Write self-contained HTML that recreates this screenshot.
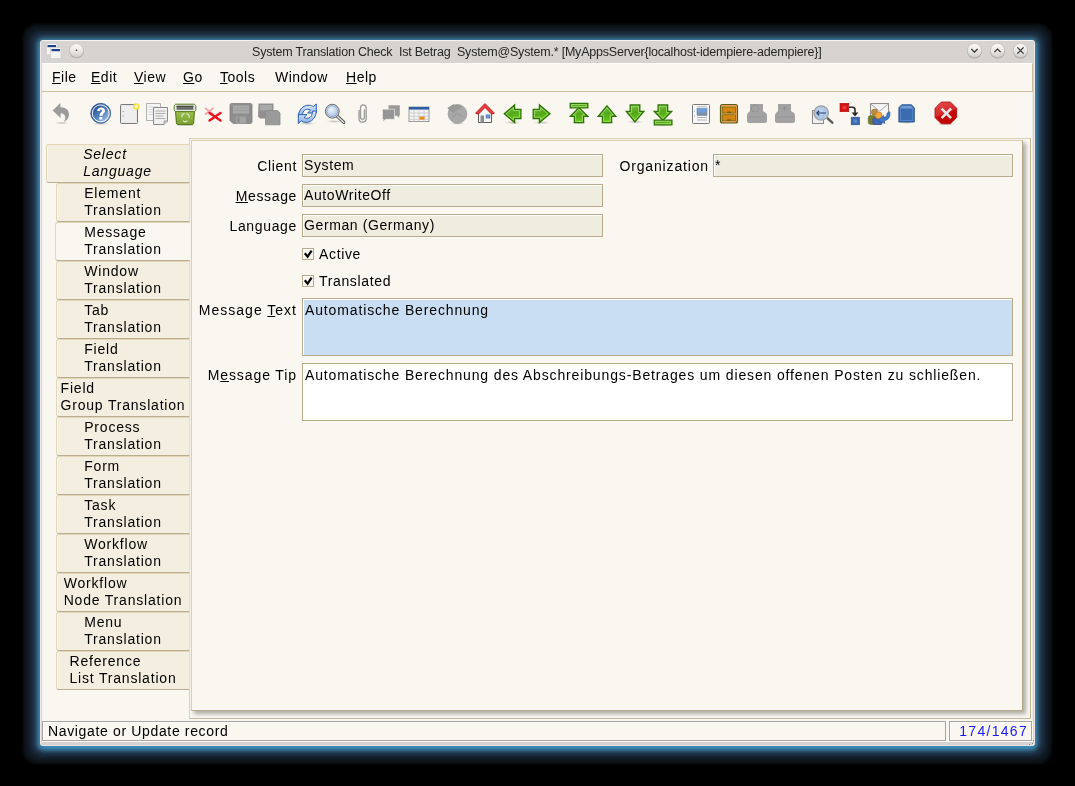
<!DOCTYPE html>
<html><head><meta charset="utf-8">
<style>
*{box-sizing:border-box;margin:0;padding:0}
html,body{width:1075px;height:786px;background:#000;overflow:hidden}
body{position:relative;font-family:"Liberation Sans",sans-serif;font-size:14px;color:#000}
.a{position:absolute}
#glow{left:40px;top:40px;width:995px;height:706px;border-radius:4px;box-shadow:0 4px 6px -1px rgba(70,170,225,0.5),0 1px 0 1px rgb(50, 120, 156),0 1px 0 2px rgb(56, 108, 142),0 1px 0 3px rgb(50, 94, 122),0 1px 0 4px rgb(44, 82, 106),0 1px 0 5px rgb(38, 68, 90),0 1px 0 6px rgb(34, 60, 81),0 1px 0 7px rgb(29, 50, 72),0 1px 0 8px rgb(27, 45, 63),0 1px 0 9px rgb(24, 40, 57),0 1px 0 10px rgb(23, 36, 51),0 1px 0 11px rgb(20, 31, 44),0 1px 0 12px rgb(17, 28, 39),0 1px 0 13px rgb(16, 25, 34),0 1px 0 14px rgb(15, 21, 29),0 1px 0 15px rgb(12, 20, 24),0 1px 0 16px rgb(12, 16, 22),0 1px 0 17px rgb(8, 10, 14),0 1px 0 18px rgb(3, 5, 7)}
#win{left:40px;top:40px;width:995px;height:706px;background:#d7d3d0;border-radius:3px;border-top:1px solid #f6f2f0;border-left:1px solid #efe8e6;border-right:1px solid #ece6e4;border-bottom:1px solid #e6e0de}
#cream{left:42px;top:63px;width:991px;height:678px;background:#faf7f0;border-left:1px solid #f4f2ee}
#L{position:absolute;left:0;top:0;width:1075px;height:786px;will-change:transform}
#ttext{left:252px;top:45px;font-size:12.5px;color:#262626;white-space:pre;letter-spacing:-0.2px}
#menu{left:42px;top:63px;width:991px;height:29px;border-top:1px solid #fff;border-right:1px solid #c9bd9f;border-bottom:1px solid #cdbf9c}
#tbr{left:1032px;top:92px;width:1px;height:629px;background:#ebe7e2}
#sbw{left:42px;top:741px;width:991px;height:1px;background:#fbfaf8}
.mi{position:absolute;top:6px;font-size:14px;letter-spacing:0.5px;white-space:pre}
.u{text-decoration:underline;text-underline-offset:1px;text-decoration-thickness:1px}
.tab{position:absolute;width:134px;height:39px;background:#f3eee0;border:1px solid #e2d6b6;border-right:1px solid #e6dcc2;border-radius:3px 0 0 3px;border-bottom:1px solid #b9ad92;box-shadow:inset 1px 0 0 #fbf8ef}
.tab.cur{background:#faf7f0;border-right:none}
.tab .t{position:absolute;left:0;right:0;top:1px;text-align:center;line-height:17px;font-size:14px;letter-spacing:0.8px}
.tab .t span{display:inline-block;text-align:left;white-space:pre}
#pane{left:189px;top:138px;width:842px;height:581px;border:1px solid #ddd0b0;border-right-color:#bdb093;border-bottom-color:#c4b799}
#panel{left:191px;top:140px;width:832px;height:571px;border:1px solid #dcceac;border-right-color:#b4a789;border-bottom-color:#b9ab8b;box-shadow:3px 3px 4px rgba(0,0,0,0.3)}
.lbl{position:absolute;font-size:14px;white-space:pre;letter-spacing:0.65px}
.fld{position:absolute;border:1px solid #b9ab8e;box-shadow:inset 1px 1px 0 #fff;background:#efede0}
.fld .v{position:absolute;left:1px;top:2px;font-size:14px;white-space:pre;letter-spacing:0.6px}
.chk{position:absolute;width:12px;height:12px;border:1px solid #b8ab90;box-shadow:inset 1px 1px 0 #fff;background:#faf7f0}
.sb{position:absolute;top:721px;height:20px;border:1px solid #a8a6a2;box-shadow:inset 1px 1px 0 #fff}
</style></head><body>
<div id="glow" class="a"></div>
<div id="win" class="a"></div>
<div id="cream" class="a"></div>
<div id="menu" class="a"></div><div id="tbr" class="a"></div><div id="sbw" class="a"></div><svg class="a" style="left:1020px;top:730px" width="15" height="15"><g fill="#8a8684"><rect x="13" y="10" width="1" height="1"/><rect x="12" y="13" width="1" height="1"/><rect x="9" y="14" width="1" height="1"/></g><g fill="#fff"><rect x="14" y="11" width="1" height="1"/><rect x="13" y="14" width="1" height="1"/><rect x="10" y="15" width="1" height="1"/></g></svg>
<div id="pane" class="a"></div>
<div id="panel" class="a"></div>
<svg class="a" style="left:0;top:0" width="1075" height="786" viewBox="0 0 1075 786">
<defs>
 <linearGradient id="gblue" x1="0.15" y1="0.1" x2="0.85" y2="0.9"><stop offset="0" stop-color="#234c8e"/><stop offset="0.55" stop-color="#5582bd"/><stop offset="1" stop-color="#a8c5e6"/></linearGradient>
 <linearGradient id="ggreen" x1="0.2" y1="0" x2="0.6" y2="1"><stop offset="0" stop-color="#7fbf4a"/><stop offset="0.5" stop-color="#52a818"/><stop offset="1" stop-color="#6ccc12"/></linearGradient>
 <linearGradient id="gtrash" x1="0" y1="0" x2="0" y2="1"><stop offset="0" stop-color="#9cc14e"/><stop offset="1" stop-color="#78a02e"/></linearGradient>
 <linearGradient id="gbtn" x1="0" y1="0" x2="0" y2="1"><stop offset="0" stop-color="#fbfbfb"/><stop offset="0.55" stop-color="#e9e7e5"/><stop offset="1" stop-color="#cfccca"/></linearGradient>
 <radialGradient id="gshadow" cx="0.5" cy="0.5" r="0.5"><stop offset="0" stop-color="#000" stop-opacity="0.22"/><stop offset="1" stop-color="#000" stop-opacity="0"/></radialGradient>
 <linearGradient id="gred" x1="0.3" y1="0" x2="0.7" y2="1"><stop offset="0" stop-color="#e24848"/><stop offset="0.5" stop-color="#d42a2a"/><stop offset="0.52" stop-color="#c90808"/><stop offset="1" stop-color="#c00000"/></linearGradient>
 <linearGradient id="gorange" x1="0" y1="0" x2="0" y2="1"><stop offset="0" stop-color="#e89a1c"/><stop offset="1" stop-color="#c97a08"/></linearGradient>
 <linearGradient id="gbook" x1="0" y1="0" x2="0" y2="1"><stop offset="0" stop-color="#4a7fc6"/><stop offset="1" stop-color="#2f5fa8"/></linearGradient>
</defs>
<!-- title bar app icon -->
<rect x="46.5" y="43.5" width="10.5" height="11" fill="#f6f6f6" stroke="#d0d0d0" stroke-width="0.8"/>
<rect x="47.5" y="45" width="8.5" height="2.2" fill="#1e3f8a"/>
<rect x="50.5" y="47.5" width="10.5" height="11" fill="#f3f3f3" stroke="#d0d0d0" stroke-width="0.8"/>
<rect x="51.5" y="49" width="8.5" height="2.2" fill="#1e3f8a"/>
<!-- pin button -->
<circle cx="76.5" cy="51.2" r="7.1" fill="#a4a09d"/>
<circle cx="76.5" cy="50.5" r="6.9" fill="url(#gbtn)" stroke="#bdb9b6" stroke-width="0.6"/>
<circle cx="76.5" cy="50.3" r="0.8" fill="#222"/>
<!-- min/max/close -->
<g>
<circle cx="974.5" cy="51.3" r="7.3" fill="#a4a09d"/>
<circle cx="974.5" cy="50.5" r="7.1" fill="url(#gbtn)" stroke="#bdb9b6" stroke-width="0.6"/>
<path d="M971.4,49 L974.5,52.1 L977.6,49" fill="none" stroke="#2e2e2e" stroke-width="1.2"/>
<circle cx="997.5" cy="51.3" r="7.3" fill="#a4a09d"/>
<circle cx="997.5" cy="50.5" r="7.1" fill="url(#gbtn)" stroke="#bdb9b6" stroke-width="0.6"/>
<path d="M994.4,52.2 L997.5,49.1 L1000.6,52.2" fill="none" stroke="#2e2e2e" stroke-width="1.2"/>
<circle cx="1020.5" cy="51.3" r="7.3" fill="#a4a09d"/>
<circle cx="1020.5" cy="50.5" r="7.1" fill="url(#gbtn)" stroke="#bdb9b6" stroke-width="0.6"/>
<path d="M1017.4,47.4 L1023.6,53.6 M1023.6,47.4 L1017.4,53.6" fill="none" stroke="#2e2e2e" stroke-width="1.2"/>
</g>

<!-- 1 undo -->
<ellipse cx="62" cy="123" rx="7" ry="1.6" fill="url(#gshadow)"/>
<path d="M52.6,110.4 L60.4,103 L60.4,107.2 C65.5,107 69,110 69,114.5 C69,118 67,120.5 63.6,122 C65.2,120 65.6,118 65,116.2 C64.4,114.4 63,113.4 60.6,113.3 L60.6,118 Z" fill="#9c9c9c"/>
<!-- 2 help -->
<ellipse cx="101" cy="123.5" rx="9" ry="1.8" fill="url(#gshadow)"/>
<circle cx="100.7" cy="113.3" r="9.9" fill="url(#gblue)" stroke="#234d92" stroke-width="0.9"/>
<circle cx="100.7" cy="113.3" r="8.4" fill="none" stroke="#fff" stroke-width="1" opacity="0.95"/>
<path d="M97.2,111 C97.2,108.6 98.8,107.4 101.2,107.4 C103.6,107.4 105,108.8 105,110.7 C105,113 102.6,113.4 102.5,115.8 L99.5,115.8 C99.5,112.6 101.9,112.3 101.9,110.7 C101.9,110 101.5,109.6 100.9,109.6 C100.3,109.6 99.9,110.1 99.9,111 Z" fill="#fff"/>
<rect x="99.3" y="116.9" width="3.1" height="2.7" fill="#fff"/>
<!-- 3 new -->
<rect x="120.5" y="104.5" width="17" height="19" rx="1" fill="#e4e4e4" stroke="#7a7a7a" stroke-width="1"/>
<rect x="121.5" y="105.5" width="15" height="17" fill="#eeeeee"/>
<circle cx="123.2" cy="111.5" r="0.6" fill="#888"/><circle cx="123.2" cy="116" r="0.6" fill="#888"/>
<circle cx="136.3" cy="106.5" r="2.6" fill="#fff7b0" stroke="#f2de3a" stroke-width="1.3"/>
<!-- 4 copy -->
<path d="M146.5,103.5 L160.5,103.5 L160.5,120.5 L146.5,120.5 Z" fill="#f5f5f5" stroke="#b0b0b0" stroke-width="1"/>
<path d="M148.5,107 h9 M148.5,109.5 h9 M148.5,112 h9 M148.5,114.5 h9" stroke="#cfcfcf" stroke-width="0.8"/>
<path d="M153.5,107.5 L167.5,107.5 L167.5,121 L164,124.5 L153.5,124.5 Z" fill="#f0f0f0" stroke="#8a8a8a" stroke-width="1"/>
<path d="M164,124.5 L164,121 L167.5,121" fill="#cfcfcf" stroke="#8a8a8a" stroke-width="0.8"/>
<path d="M155.5,111 h10 M155.5,113.5 h10 M155.5,116 h8 M155.5,118.5 h10" stroke="#a5a5a5" stroke-width="0.9"/>
<!-- 5 trash -->
<ellipse cx="185" cy="125" rx="10" ry="1.5" fill="url(#gshadow)"/>
<path d="M175.5,110.5 L194.5,110.5 L193.6,123.2 C193.5,124.2 192.8,124.6 192,124.6 L178,124.6 C177.2,124.6 176.5,124.2 176.4,123.2 Z" fill="url(#gtrash)" stroke="#4f7319" stroke-width="1"/>
<path d="M176.2,104.2 L193.8,104.2 C195,104.2 195.8,105.2 195.8,106.3 L195.8,109.6 C195.8,110.7 195,111.6 193.8,111.6 L176.2,111.6 C175,111.6 174.2,110.7 174.2,109.6 L174.2,106.3 C174.2,105.2 175,104.2 176.2,104.2 Z" fill="#e6e9e2" stroke="#557a1c" stroke-width="1"/>
<rect x="176.6" y="105.8" width="16.8" height="4" fill="#6a6d68"/>
<rect x="176.6" y="105.8" width="16.8" height="1.2" fill="#4a4c48"/>
<path d="M181.8,117.2 a3.4,3.4 0 0 1 2.8,-3.6 M186.6,113.6 a3.4,3.4 0 0 1 2.5,4.2 M187.6,120.6 a3.4,3.4 0 0 1 -4.6,0" fill="none" stroke="#e2eccc" stroke-width="1.1"/>
<!-- 6 delete -->
<path d="M205,108 L213.5,114.5 M213.5,108 L205,114.5" stroke="#f7a0a8" stroke-width="1.6"/>
<path d="M209.5,113 L220.5,120.5 M220.5,113 L209.5,120.5" stroke="#ec1320" stroke-width="2.4" stroke-linecap="round"/>
<!-- 7 save -->
<path d="M231.5,103.5 L250.5,103.5 C251.3,103.5 252,104.2 252,105 L252,122 C252,122.8 251.3,123.5 250.5,123.5 L233,123.5 L230,120.5 L230,105 C230,104.2 230.7,103.5 231.5,103.5 Z" fill="#8e8e8e" stroke="#7f7f7f" stroke-width="0.8"/>
<rect x="233" y="105.5" width="16" height="8" fill="#a9a9a9"/>
<path d="M234,108 h14 M234,110.5 h14" stroke="#9c9c9c" stroke-width="0.8"/>
<rect x="236" y="116.5" width="10" height="7" fill="#a3a3a3"/>
<rect x="237.5" y="117.5" width="2" height="5" fill="#888"/>
<!-- 8 multi save -->
<path d="M258.5,103.5 L273.5,103.5 L273.5,118.5 L260,118.5 L258,116.5 Z" fill="#909090"/>
<rect x="260" y="105" width="12" height="5.5" fill="#a9a9a9"/>
<path d="M265.5,110.5 L277.5,110.5 L280,113 L280,124.8 L265.5,124.8 Z" fill="#9a9a9a" stroke="#8a8a8a" stroke-width="0.8"/>
<!-- 9 refresh -->
<linearGradient id="grefr" x1="0" y1="0" x2="0" y2="1"><stop offset="0" stop-color="#e2ecf9"/><stop offset="1" stop-color="#86ace0"/></linearGradient>
<ellipse cx="307" cy="123.5" rx="9" ry="1.6" fill="url(#gshadow)"/>
<path d="M298.3,116.5 C298.5,110 303,105 309,105.2 C311,105.3 312.5,106 313.3,106.8 L316.3,104 L316.3,113 L307.6,113 L310.5,110.2 C309.6,109.6 308.6,109.3 307.5,109.3 C304.5,109.3 302.5,111.5 302,116.5 Z" fill="url(#grefr)" stroke="#2b60b2" stroke-width="1"/>
<path d="M316.3,111.1 C316.1,117.6 311.6,122.6 305.6,122.4 C303.6,122.3 302.1,121.6 301.3,120.8 L298.3,123.6 L298.3,114.6 L307,114.6 L304.1,117.4 C305,118 306,118.3 307.1,118.3 C310.1,118.3 312.1,116.1 312.6,111.1 Z" fill="url(#grefr)" stroke="#2b60b2" stroke-width="1"/>
<!-- 10 find -->
<radialGradient id="glens" cx="0.4" cy="0.35" r="0.7"><stop offset="0" stop-color="#eef3fa"/><stop offset="1" stop-color="#a9c4e8"/></radialGradient>
<ellipse cx="334" cy="121.5" rx="8" ry="1.6" fill="url(#gshadow)"/>
<path d="M337.3,116.3 L343.8,122.3" stroke="#555" stroke-width="3.2" stroke-linecap="round"/>
<path d="M337.3,116.3 L343.8,122.3" stroke="#e8e8e8" stroke-width="1.4" stroke-linecap="round" stroke-dasharray="1.2 0.8"/>
<circle cx="332.3" cy="111.2" r="6.9" fill="#d8d8d8" stroke="#5a5a5a" stroke-width="0.9"/>
<circle cx="332.3" cy="111.2" r="5.4" fill="url(#glens)" stroke="#7aa3d8" stroke-width="0.8"/>
<!-- 11 attach -->
<path d="M359,110 L359,118.5 C359,121 360.5,122.2 362.5,122.2 C364.5,122.2 366.2,121 366.2,118.5 L366.2,108 C366.2,106 365,104.8 363.3,104.8 C361.6,104.8 360.5,106 360.5,108 L360.5,117 C360.5,118.5 361.3,119.2 362.5,119.2 C363.7,119.2 364.4,118.5 364.4,117 L364.4,109.5" fill="none" stroke="#9b9b9b" stroke-width="1.3"/>
<!-- 12 chat -->
<path d="M388.5,105.2 L399.8,105.2 L399.8,115.8 L398.8,115.8 L399.3,118 L396.8,115.8 L388.5,115.8 Z" fill="#9a9a9a"/>
<path d="M382.5,109.2 L394.5,109.2 L394.5,119.3 L385.5,119.3 L382.8,122 L383.3,119.3 L382.5,119.3 Z" fill="#959595" stroke="#f7f5ef" stroke-width="0.6"/>
<!-- 13 grid -->
<rect x="409" y="107" width="20" height="14.5" fill="#f3f3f3" stroke="#9a9a9a" stroke-width="1"/>
<rect x="409" y="107" width="20" height="2.6" fill="#2f5ea8"/>
<path d="M409,113 h20 M409,116.3 h20 M409,119.3 h20 M414,109.6 v12 M419,109.6 v12 M424,109.6 v12" stroke="#c5c5c5" stroke-width="0.8"/>
<rect x="419.5" y="116.6" width="5" height="3" fill="#f08a1a"/>
<!-- 14 history gray circle -->
<ellipse cx="457.5" cy="123.5" rx="8" ry="1.4" fill="url(#gshadow)"/>
<circle cx="457.5" cy="113.8" r="9.4" fill="#a8a8a8" stroke="#9a9a9a" stroke-width="0.8"/>
<path d="M452.6,117.6 L457.4,112.8 L461.4,116.6" fill="none" stroke="#8f8f8f" stroke-width="0.9"/>
<path d="M447.8,108.2 L453.6,104.5 L453.3,106.6 C455.5,105.2 458.5,105 461.5,106.5 L456.8,109.6 C455.6,110 454.6,110.8 453.6,112.4 Z" fill="#9c9c9c" stroke="#8a8a8a" stroke-width="0.7"/>
<path d="M459,104.6 C462,105.3 464.5,107.3 465.8,110" fill="none" stroke="#c8c8c8" stroke-width="1" stroke-dasharray="1 0.8"/>
<!-- 15 home -->
<path d="M478.5,112.5 L485,106.5 L491.5,112.5 L491.5,122.5 L478.5,122.5 Z" fill="#f6f6f6" stroke="#5e5e5e" stroke-width="1"/>
<rect x="480.5" y="115.5" width="3.5" height="7" fill="#8c8c8c"/>
<rect x="486" y="114.8" width="4" height="3.4" fill="#4a7ccc" stroke="#6f86aa" stroke-width="0.5"/>
<path d="M488,114.8 v3.4" stroke="#dfe8f4" stroke-width="0.5"/>
<path d="M475.6,113.2 L485,103.6 L494.4,113.2 L491.6,114.2 L485,107.4 L478.4,114.2 Z" fill="#ef3b3b" stroke="#b31b1b" stroke-width="0.9" stroke-linejoin="round"/>
<!-- 16 back -->
<ellipse cx="512.6" cy="122.6" rx="8.5" ry="1.8" fill="url(#gshadow)"/>
<path d="M504.30,113.80 L514.60,105.00 L514.60,109.30 L520.90,109.30 L520.90,118.50 L514.60,118.50 L514.60,122.60 Z" fill="url(#ggreen)" stroke="#2c7405" stroke-width="1.3" stroke-linejoin="miter"/>
<path d="M506.22,113.80 L513.35,119.89 L513.35,117.25 L519.65,117.25 L519.65,110.55 L513.35,110.55 L513.35,107.71 Z" fill="none" stroke="#b6e88a" stroke-width="0.8" opacity="0.85"/>
<ellipse cx="541.6" cy="122.6" rx="8.5" ry="1.8" fill="url(#gshadow)"/>
<path d="M550.00,113.80 L539.40,105.00 L539.40,109.30 L533.20,109.30 L533.20,118.50 L539.40,118.50 L539.40,122.60 Z" fill="url(#ggreen)" stroke="#2c7405" stroke-width="1.3" stroke-linejoin="miter"/>
<path d="M548.04,113.80 L540.65,107.66 L540.65,110.55 L534.45,110.55 L534.45,117.25 L540.65,117.25 L540.65,119.94 Z" fill="none" stroke="#b6e88a" stroke-width="0.8" opacity="0.85"/>
<ellipse cx="579.0" cy="122.6" rx="8.5" ry="1.8" fill="url(#gshadow)"/>
<path d="M587.80,103.30 L587.80,107.90 L570.30,107.90 L570.30,103.30 Z" fill="url(#ggreen)" stroke="#2c7405" stroke-width="1.3" stroke-linejoin="miter"/>
<path d="M579.00,107.60 L587.80,116.30 L583.60,116.30 L583.60,122.60 L574.40,122.60 L574.40,116.30 L570.30,116.30 Z" fill="url(#ggreen)" stroke="#2c7405" stroke-width="1.3" stroke-linejoin="miter"/>
<path d="M586.55,104.55 L571.55,104.55 L571.55,106.65 L586.55,106.65 Z" fill="none" stroke="#b6e88a" stroke-width="0.8" opacity="0.85"/>
<path d="M579.01,109.36 L573.32,115.05 L575.65,115.05 L575.65,121.35 L582.35,121.35 L582.35,115.05 L584.76,115.05 Z" fill="none" stroke="#b6e88a" stroke-width="0.8" opacity="0.85"/>
<ellipse cx="607.0" cy="122.6" rx="8.5" ry="1.8" fill="url(#gshadow)"/>
<path d="M607.00,105.80 L615.80,116.30 L611.60,116.30 L611.60,122.60 L602.40,122.60 L602.40,116.30 L598.20,116.30 Z" fill="url(#ggreen)" stroke="#2c7405" stroke-width="1.3" stroke-linejoin="miter"/>
<path d="M607.00,107.75 L600.88,115.05 L603.65,115.05 L603.65,121.35 L610.35,121.35 L610.35,115.05 L613.12,115.05 Z" fill="none" stroke="#b6e88a" stroke-width="0.8" opacity="0.85"/>
<ellipse cx="635.1" cy="121.9" rx="8.5" ry="1.8" fill="url(#gshadow)"/>
<path d="M635.00,121.90 L643.90,111.30 L639.80,111.30 L639.80,105.00 L630.20,105.00 L630.20,111.30 L626.30,111.30 Z" fill="url(#ggreen)" stroke="#2c7405" stroke-width="1.3" stroke-linejoin="miter"/>
<path d="M635.01,119.94 L641.22,112.55 L638.55,112.55 L638.55,106.25 L631.45,106.25 L631.45,112.55 L628.94,112.55 Z" fill="none" stroke="#b6e88a" stroke-width="0.8" opacity="0.85"/>
<ellipse cx="663.0" cy="124.9" rx="8.5" ry="1.8" fill="url(#gshadow)"/>
<path d="M662.90,120.20 L671.70,111.30 L667.70,111.30 L667.70,105.00 L658.10,105.00 L658.10,111.30 L654.20,111.30 Z" fill="url(#ggreen)" stroke="#2c7405" stroke-width="1.3" stroke-linejoin="miter"/>
<path d="M671.90,120.10 L671.90,124.90 L654.30,124.90 L654.30,120.10 Z" fill="url(#ggreen)" stroke="#2c7405" stroke-width="1.3" stroke-linejoin="miter"/>
<path d="M662.91,118.42 L668.71,112.55 L666.45,112.55 L666.45,106.25 L659.35,106.25 L659.35,112.55 L657.17,112.55 Z" fill="none" stroke="#b6e88a" stroke-width="0.8" opacity="0.85"/>
<path d="M670.65,121.35 L655.55,121.35 L655.55,123.65 L670.65,123.65 Z" fill="none" stroke="#b6e88a" stroke-width="0.8" opacity="0.85"/>
<!-- 22 report -->
<rect x="692.5" y="104.5" width="17" height="19" rx="1" fill="#f8f8f8" stroke="#7a7a7a" stroke-width="1"/>
<path d="M697,106.8 h10 M697,117.5 h10 M697,120 h10" stroke="#a0a0a0" stroke-width="0.8"/>
<rect x="697" y="108.5" width="10" height="6.8" fill="#6f9fd8" stroke="#4a74b0" stroke-width="0.5"/>
<path d="M697,115.3 L700,112 L703,113.5 L707,110.5 L707,115.3 Z" fill="#8090a0"/>
<circle cx="694.5" cy="111" r="0.5" fill="#777"/><circle cx="694.5" cy="116" r="0.5" fill="#777"/>
<!-- 23 archive -->
<rect x="720.5" y="104.5" width="17" height="18.5" rx="2" fill="#e3a45a" stroke="#5e5a16" stroke-width="1.2"/>
<rect x="722.5" y="107" width="13" height="6" fill="#d4860f" stroke="#6a5a10" stroke-width="0.6"/>
<rect x="722.5" y="114.8" width="13" height="6" fill="#d4860f" stroke="#6a5a10" stroke-width="0.6"/>
<rect x="727" y="111.6" width="4" height="1.2" fill="#6a5a10"/><rect x="727" y="119.4" width="4" height="1.2" fill="#6a5a10"/>
<!-- 24 print preview gray -->
<path d="M750,104 L763,104 L763,111 L766,113 C767,114 767,115 767,116 L767,121 C767,122 766,123 765,123 L749,123 C748,123 747,122 747,121 L747,116 C747,115 747,114 748,113 L750,111 Z" fill="#a2a2a2"/>
<circle cx="755" cy="108.5" r="3.6" fill="none" stroke="#929292" stroke-width="1"/>
<path d="M749,117 h16" stroke="#949494" stroke-width="0.8"/>
<!-- 25 print gray -->
<path d="M778,104 L791,104 L791,111 L794,113 C795,114 795,115 795,116 L795,121 C795,122 794,123 793,123 L777,123 C776,123 775,122 775,121 L775,116 C775,115 775,114 776,113 L778,111 Z" fill="#a2a2a2"/>
<path d="M784.5,110.5 L784.5,107 M782.5,109 L784.5,106.8 L786.5,109" fill="none" stroke="#8f8f8f" stroke-width="1"/>
<path d="M777,117 h16" stroke="#949494" stroke-width="0.8"/>
<!-- 26 zoom across -->
<rect x="812.5" y="110.5" width="11" height="13" fill="#f0f0f0" stroke="#8a8a8a" stroke-width="1"/>
<path d="M827.6,118.4 L832.3,122.6" stroke="#5e5e5e" stroke-width="2.6" stroke-linecap="round"/>
<circle cx="821.2" cy="113" r="7.2" fill="#a9c3e4" fill-opacity="0.92" stroke="#a0a0a0" stroke-width="1.3"/>
<circle cx="820" cy="111.5" r="3.5" fill="#c8daf0" opacity="0.6"/>
<path d="M816.6,113 h9.4 M816.6,113 l2.6,-2.3 M816.6,113 l2.6,2.3" fill="none" stroke="#26406e" stroke-width="1.2"/>
<!-- 27 translate -->
<rect x="840" y="103.3" width="8.8" height="8.4" fill="#d21515" stroke="#b00a0a" stroke-width="0.6"/>
<rect x="842.6" y="105.8" width="3.6" height="3.4" fill="#e83a3a"/>
<path d="M849,107.2 L852.6,107.2 C854.2,107.2 855,108 855,109.6 L855,113.6" fill="none" stroke="#2a2a2a" stroke-width="1.6"/>
<path d="M851.6,112.4 L855,116.4 L858.4,112.4 Z" fill="#2a2a2a"/>
<rect x="851.2" y="117.2" width="8.4" height="7.6" fill="#3a68b0" stroke="#2a508e" stroke-width="0.6"/>
<rect x="853.6" y="119.4" width="3.6" height="3.2" fill="#5a88cc"/>
<!-- 28 workflow -->
<rect x="870.6" y="103.6" width="18" height="13.6" fill="#f4f4f4" stroke="#7c7c7c" stroke-width="0.9"/>
<path d="M870.6,103.8 L879.6,111.2 L888.6,103.8" fill="none" stroke="#9a9a9a" stroke-width="0.8"/>
<rect x="868.2" y="115.6" width="7.2" height="8.8" rx="2.4" fill="#6f812e" stroke="#55661e" stroke-width="0.5"/>
<circle cx="874.6" cy="112.2" r="3.2" fill="#b88a44" stroke="#8c6428" stroke-width="0.5"/>
<rect x="872.4" y="117.6" width="10" height="7.4" rx="2" fill="#6a3e8c"/>
<rect x="873.4" y="118.4" width="8" height="6" fill="#3b6ab4"/>
<circle cx="878.8" cy="115.4" r="3.4" fill="#f2a93e" stroke="#b8741a" stroke-width="0.6"/>
<path d="M878.2,120.4 L883.6,115.4 L883.8,117.6 C886,117.4 887.2,116 887,113.2 L889.8,111.8 C890.6,116.4 888.6,120 884.4,120.8 L884.8,123.6 Z" fill="#3f78c6" stroke="#24569e" stroke-width="0.6"/>
<!-- 29 book -->
<ellipse cx="906.5" cy="122.5" rx="8" ry="1.4" fill="url(#gshadow)"/>
<path d="M901.6,104.8 L911.4,104.8 L914.3,107.7 L914.3,122 L898.9,122 L898.9,107.7 Z" fill="#3b6cb0" stroke="#24508f" stroke-width="0.9"/>
<path d="M902,105.8 L911,105.8 L913.2,108 L899.9,108 Z" fill="#6f9bd2"/>
<rect x="900.4" y="108.6" width="12.4" height="12" fill="none" stroke="#5f8cc8" stroke-width="0.8"/>
<!-- 30 close red octagon -->
<ellipse cx="946" cy="124" rx="10" ry="1.6" fill="url(#gshadow)"/>
<path d="M941.3,102 L950.4,102 L956.7,108.3 L956.7,117.5 L950.4,123.8 L941.3,123.8 L935,117.5 L935,108.3 Z" fill="url(#gred)" stroke="#b00c0c" stroke-width="0.8"/>
<path d="M941.6,108.6 L951.1,118.1 M951.1,108.6 L941.6,118.1" stroke="#e8e8e8" stroke-width="2.5"/>
</svg>

<div id="L">
<div id="ttext" class="a">System Translation Check  Ist Betrag  System@System.* [MyAppsServer{localhost-idempiere-adempiere}]</div>
<span class="mi" style="left:52px;top:69px"><span class="u">F</span>ile</span>
<span class="mi" style="left:91px;top:69px"><span class="u">E</span>dit</span>
<span class="mi" style="left:134px;top:69px"><span class="u">V</span>iew</span>
<span class="mi" style="left:183px;top:69px"><span class="u">G</span>o</span>
<span class="mi" style="left:220px;top:69px"><span class="u">T</span>ools</span>
<span class="mi" style="left:275px;top:69px">Window</span>
<span class="mi" style="left:346px;top:69px"><span class="u">H</span>elp</span>
<div class="tab" style="left:46px;top:144px;width:144px"><div class="t" style="padding-right:1px"><span style="font-style:italic;letter-spacing:0.8px">Select<br>Language</span></div></div>
<div class="tab" style="left:56px;top:183px"><div class="t"><span>Element<br>Translation</span></div></div>
<div class="tab cur" style="left:55px;top:222px;width:135px"><div class="t" style="padding-right:1px;padding-left:1px"><span>Message<br>Translation</span></div></div>
<div class="tab" style="left:56px;top:261px"><div class="t"><span>Window<br>Translation</span></div></div>
<div class="tab" style="left:56px;top:300px"><div class="t"><span>Tab<br>Translation</span></div></div>
<div class="tab" style="left:56px;top:339px"><div class="t"><span>Field<br>Translation</span></div></div>
<div class="tab" style="left:56px;top:378px"><div class="t"><span>Field<br>Group Translation</span></div></div>
<div class="tab" style="left:56px;top:417px"><div class="t"><span>Process<br>Translation</span></div></div>
<div class="tab" style="left:56px;top:456px"><div class="t"><span>Form<br>Translation</span></div></div>
<div class="tab" style="left:56px;top:495px"><div class="t"><span>Task<br>Translation</span></div></div>
<div class="tab" style="left:56px;top:534px"><div class="t"><span>Workflow<br>Translation</span></div></div>
<div class="tab" style="left:56px;top:573px"><div class="t"><span>Workflow<br>Node Translation</span></div></div>
<div class="tab" style="left:56px;top:612px"><div class="t"><span>Menu<br>Translation</span></div></div>
<div class="tab" style="left:56px;top:651px"><div class="t"><span>Reference<br>List Translation</span></div></div>
<div class="lbl" style="right:778px;top:158px">Client</div>
<div class="fld" style="left:302px;top:154px;width:301px;height:23px"><div class="v">System</div></div>
<div class="lbl" style="right:366px;top:158px;letter-spacing:0.85px">Organization</div>
<div class="fld" style="left:713px;top:154px;width:300px;height:23px"><div class="v">*</div></div>
<div class="lbl" style="right:778px;top:188px"><span class="u">M</span>essage</div>
<div class="fld" style="left:302px;top:184px;width:301px;height:23px"><div class="v">AutoWriteOff</div></div>
<div class="lbl" style="right:778px;top:218px">Language</div>
<div class="fld" style="left:302px;top:214px;width:301px;height:23px"><div class="v">German (Germany)</div></div>
<div class="chk" style="left:302px;top:248px"></div>
<div class="lbl" style="left:319px;top:246px">Active</div>
<div class="chk" style="left:302px;top:275px"></div>
<div class="lbl" style="left:319px;top:273px">Translated</div>
<svg class="a" style="left:0;top:0" width="1075" height="786"><path d="M304.8,253.2 L307.6,256.6 L311.6,250.6 M304.8,280.2 L307.6,283.6 L311.6,277.6" fill="none" stroke="#000" stroke-width="2.2" stroke-linejoin="miter"/></svg>
<div class="lbl" style="right:778px;top:302px;letter-spacing:1px">Message <span class="u">T</span>ext</div>
<div class="fld" style="left:302px;top:298px;width:711px;height:58px;background:#cadef3"><div class="v" style="left:2px;top:3px;letter-spacing:0.86px">Automatische Berechnung</div></div>
<div class="lbl" style="right:778px;top:367px;letter-spacing:0.9px">M<span class="u">e</span>ssage Tip</div>
<div class="fld" style="left:302px;top:363px;width:711px;height:58px;background:#fff"><div class="v" style="left:2px;top:3px;letter-spacing:0.86px">Automatische Berechnung des Abschreibungs-Betrages um diesen offenen Posten zu schließen.</div></div>
<div class="sb" style="left:42px;width:904px"><div class="lbl" style="left:5px;top:1px">Navigate or Update record</div></div>
<div class="sb" style="left:949px;width:83px"><div class="lbl" style="right:3px;top:1px;color:#1a1aff;letter-spacing:1.3px">174/1467</div></div>
</div>
</body></html>
